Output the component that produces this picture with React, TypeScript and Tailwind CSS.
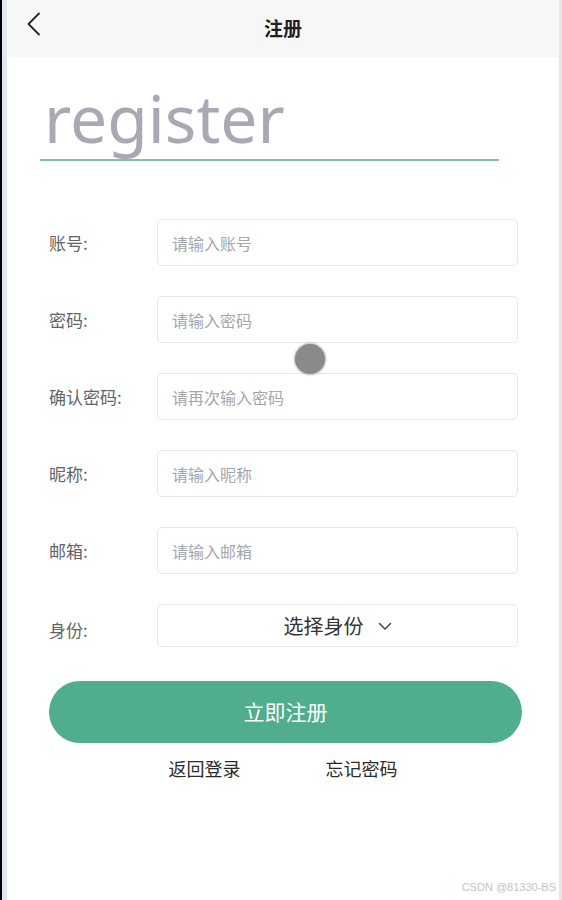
import React from "react";

const cjk = { fontFamily: '"Noto Sans CJK SC", "Noto Sans", sans-serif' };

function Field({ label, placeholder }: { label: string; placeholder: string }) {
  return (
    <div className="flex items-center">
      <div className="w-[150px] pl-[42px] text-[17px] text-[#606368] whitespace-nowrap">{label}</div>
      <div className="w-[361px] h-[47px] border border-[#e6e7ea] rounded-[5px] flex items-center pl-[14px] text-[16px] text-[#a3a6ac]">
        {placeholder}
      </div>
    </div>
  );
}

export default function App() {
  return (
    <div className="relative flex w-[562px] h-[900px] overflow-hidden bg-white" style={cjk}>
      <div className="w-[2px] bg-black" />
      <div className="w-[5px] bg-[#e2e7ee]" />
      <div className="flex-1 flex flex-col bg-white">
        <div className="h-[57px] bg-[#f7f7f7] relative flex items-center justify-center">
          <svg className="absolute left-[19px] top-[12px]" width="16" height="24" viewBox="0 0 16 24" fill="none">
            <path d="M13 1.5 L2.5 12 L13 22.5" stroke="#222" strokeWidth="1.8" strokeLinecap="round" strokeLinejoin="round" />
          </svg>
          <span className="text-[19px] font-bold text-[#1f1f1f]">注册</span>
        </div>
        <div className="pl-[33px] pt-[20px]">
          <div
            className="pl-[4px] text-[66px] leading-[80px] text-[#a9a8b3]"
            style={{ fontFamily: '"Noto Sans", sans-serif' }}
          >
            register
          </div>
          <div className="mt-[2px] w-[459px] h-[2px] bg-[#7cc4a7]" />
        </div>
        <div className="mt-[58px] flex flex-col gap-[30px]">
          <Field label="账号:" placeholder="请输入账号" />
          <Field label="密码:" placeholder="请输入密码" />
          <Field label="确认密码:" placeholder="请再次输入密码" />
          <Field label="昵称:" placeholder="请输入昵称" />
          <Field label="邮箱:" placeholder="请输入邮箱" />
          <div className="flex items-center">
            <div className="w-[150px] pl-[42px] pt-[8px] text-[17px] text-[#606368]">身份:</div>
            <div className="w-[361px] h-[43px] border border-[#e6e7ea] rounded-[5px] flex items-center justify-center gap-[14px] text-[20px] text-[#333]">
              <span>选择身份</span>
              <svg width="14" height="10" viewBox="0 0 14 10" fill="none">
                <path d="M1.5 2.5 L7 8 L12.5 2.5" stroke="#444" strokeWidth="1.5" strokeLinecap="round" strokeLinejoin="round" />
              </svg>
            </div>
          </div>
        </div>
        <div className="mt-[34px] ml-[42px] w-[473px] h-[62px] rounded-full bg-[#50ae8c] flex items-center justify-center text-[21px] text-white">
          立即注册
        </div>
        <div className="mt-[12px] flex justify-center gap-[85px] text-[18px] text-[#2b2b2b]">
          <span>返回登录</span>
          <span>忘记密码</span>
        </div>
      </div>
      <div className="w-[3px] bg-[#e2e7ee]" />
      <div className="absolute left-[295px] top-[344px] w-[30px] h-[30px] rounded-full bg-[#8a8a8a] shadow-[0_0_2px_1px_rgba(138,138,138,0.6)]" />
      <div
        className="absolute right-[6px] bottom-[5px] text-[11px] text-[#c4c4c4]"
        style={{ fontFamily: '"Liberation Sans", sans-serif' }}
      >
        CSDN @81330-BS
      </div>
    </div>
  );
}
